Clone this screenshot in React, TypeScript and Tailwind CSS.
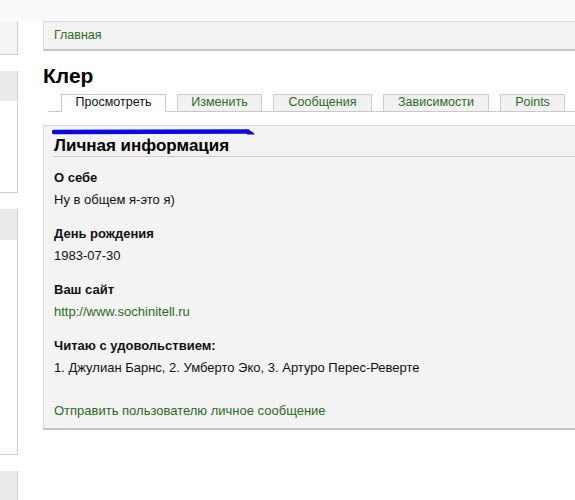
import React from "react";

const tabs = [
  { label: "Просмотреть", w: "w-[105px]", active: true },
  { label: "Изменить", w: "w-[85px]", active: false },
  { label: "Сообщения", w: "w-[99px]", active: false },
  { label: "Зависимости", w: "w-[106px]", active: false },
  { label: "Points", w: "w-[65px]", active: false },
];

const fields = [
  { label: "О себе", value: "Ну в общем я-это я)" },
  { label: "День рождения", value: "1983-07-30" },
  { label: "Ваш сайт", value: "http://www.sochinitell.ru", link: true },
  {
    label: "Читаю с удовольствием:",
    value: "1. Джулиан Барнс, 2. Умберто Эко, 3. Артуро Перес-Реверте",
  },
];

function Sidebar() {
  return (
    <aside className="w-[18px] shrink-0 flex flex-col gap-4">
      <div className="h-[34px] bg-[#f5f5f5] border-r border-b border-[#cfcfcf]" />
      <div className="h-[122px] border-r border-b border-[#cfcfcf] flex flex-col">
        <div className="h-[30px] bg-[#ebebeb]" />
      </div>
      <div className="h-[246px] border-r border-b border-[#cfcfcf] flex flex-col">
        <div className="h-[31px] bg-[#ebebeb]" />
      </div>
      <div className="h-[40px] bg-[#ebebeb] border-r border-[#cfcfcf]" />
    </aside>
  );
}

export default function App() {
  return (
    <div
      className="w-[575px] h-[500px] overflow-hidden bg-white text-[13px] text-[#111]"
      style={{ fontFamily: '"Liberation Sans", Arial, sans-serif' }}
    >
      <div className="h-[21px] bg-[#fafafa]" />
      <div className="flex gap-[25px]">
        <Sidebar />
        <main className="w-[560px] shrink-0">
          {/* breadcrumb */}
          <div className="h-[30px] flex items-center pl-[10px] bg-[#f3f3f3] border-t border-l border-[#dcdcdc] border-b-2 border-b-[#c4c4c4]">
            <a className="text-[12.5px] leading-[15px] text-[#2d6a22]">Главная</a>
          </div>

          <h1 className="mt-[13px] text-[21px] leading-[24px] font-bold text-black">Клер</h1>

          {/* tabs */}
          <div className="mt-[6px] ml-[5px] pl-[13px] flex gap-[11px] border-b border-[#c8c8c8] text-[12.5px]">
            {tabs.map((t) => (
              <div
                key={t.label}
                className={
                  t.active
                    ? `${t.w} h-[18px] -mb-px border border-[#c8c8c8] border-b-white bg-white text-center leading-[15px] text-[#111]`
                    : `${t.w} h-[17px] border border-b-0 border-[#cccccc] bg-[#f1f1f1] text-center leading-[15px] text-[#2d6a22]`
                }
              >
                {t.label}
              </div>
            ))}
          </div>

          {/* content */}
          <section className="relative mt-[13px] bg-[#f3f3f3] border-t border-l border-[#d6d6d6] border-b-2 border-b-[#c4c4c4] pl-[10px] pt-[10px] pb-[6px]">
            <svg
              className="absolute left-[8px] top-[2px]"
              width="204"
              height="8"
              viewBox="0 0 204 8"
            >
              <path d="M2 4 L196 3.5" stroke="#0a0ae0" strokeWidth="4.5" strokeLinecap="round" />
              <path d="M193 1.5 L200 3.5 L203 6.5 L195 6.5 Z" fill="#0a0ae0" />
            </svg>

            <h2 className="text-[17px] leading-[20px] font-bold text-black border-b border-[#cccccc] -ml-px">
              <span className="pl-px">Личная информация</span>
            </h2>

            <div className="mt-[10px] flex flex-col gap-[12px]">
              {fields.map((f) => (
                <div key={f.label} className="leading-[22px]">
                  <div className="font-bold">{f.label}</div>
                  <div className={f.link ? "text-[#2d6a22]" : ""}>{f.value}</div>
                </div>
              ))}
            </div>

            <a className="block mt-[21px] leading-[22px] text-[#2d6a22]">
              Отправить пользователю личное сообщение
            </a>
          </section>
        </main>
      </div>
    </div>
  );
}
